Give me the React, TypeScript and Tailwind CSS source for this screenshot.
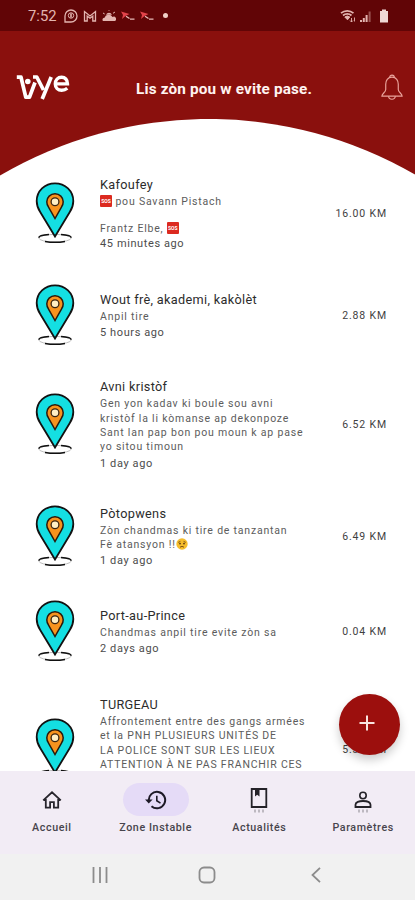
import { ReactNode } from "react";

type Zone = {
  title: string;
  lines: ReactNode[];
  lineHeight?: string;
  time?: string;
  distance: string;
  row: string;
};

function Sos() {
  return (
    <span className="inline-flex h-[12px] w-[12px] items-center justify-center rounded-[1px] bg-[#dc2a20] align-[2px] text-[5px] font-bold leading-none tracking-normal text-white">
      SOS
    </span>
  );
}

function SadFace() {
  return (
    <svg viewBox="0 0 12 12" className="inline h-[12px] w-[12px] align-[-2px]">
      <circle cx="6" cy="6" r="5.7" fill="#f5bd2c" />
      <path d="M2.2 4.4 4.4 3.4M9.8 4.4 7.6 3.4" stroke="#6b4212" strokeWidth="0.8" />
      <circle cx="4" cy="5.6" r="0.9" fill="#5b3413" />
      <circle cx="8" cy="5.6" r="0.9" fill="#5b3413" />
      <path d="M4 9.2q2-1.7 4 0" stroke="#6b4212" strokeWidth="0.9" fill="none" />
    </svg>
  );
}

function Pin() {
  return (
    <svg viewBox="0 0 40 62" className="mb-[2px] h-[62px] w-[40px] shrink-0" fill="none">
      <ellipse cx="20" cy="56.2" rx="16" ry="3.8" fill="#fff" stroke="#bdbdbd" strokeWidth="1" />
      <path
        d="M14 52.6C8 53 3.8 54.3 3.8 55.8M26 52.6c6 .4 10.2 1.7 10.2 3.2M10 59.4c6 1.1 14 1.1 20 0"
        stroke="#111"
        strokeWidth="1.5"
      />
      <path
        d="M20 1.3C9.8 1.3 1.7 9.2 1.7 19c0 4 1.3 7.7 3.5 11L20 54.5 34.8 30c2.2-3.3 3.5-7 3.5-11C38.3 9.2 30.2 1.3 20 1.3Z"
        fill="#14dfe2"
        stroke="#121212"
        strokeWidth="1.8"
      />
      <path
        d="M20 11.8c-4.6 0-8.2 3.5-8.2 8 0 1.9.6 3.6 1.600 5L20 36.5l6.600-11.700c1-1.400 1.600-3.100 1.600-5 0-4.500-3.600-8-8.200-8Z"
        fill="#f7931e"
        stroke="#2a1a0c"
        strokeWidth="1.5"
      />
      <circle cx="20" cy="19.8" r="3.9" fill="#ffefc4" stroke="#3a2410" strokeWidth="1.3" />
    </svg>
  );
}

const zones: Zone[] = [
  {
    title: "Kafoufey",
    lines: [
      <>
        <Sos /> pou Savann Pistach
      </>,
      <>&nbsp;</>,
      <>
        Frantz Elbe, <Sos />
      </>,
    ],
    lineHeight: "h-[13.5px]",
    time: "45 minutes ago",
    distance: "16.00 KM",
    row: "h-[96px]",
  },
  {
    title: "Wout frè, akademi, kakòlèt",
    lines: ["Anpil tire"],
    time: "5 hours ago",
    distance: "2.88 KM",
    row: "h-[108px]",
  },
  {
    title: "Avni kristòf",
    lines: [
      "Gen yon kadav ki boule sou avni",
      "kristòf la li kòmanse ap dekonpoze",
      "Sant lan pap bon pou moun k ap pase",
      "yo sitou timoun",
    ],
    time: "1 day ago",
    distance: "6.52 KM",
    row: "h-[110px]",
  },
  {
    title: "Pòtopwens",
    lines: [
      "Zòn chandmas ki tire de tanzantan",
      <>
        Fè atansyon !!
        <SadFace />
      </>,
    ],
    time: "1 day ago",
    distance: "6.49 KM",
    row: "h-[114px]",
  },
  {
    title: "Port-au-Prince",
    lines: ["Chandmas anpil tire evite zòn sa"],
    time: "2 days ago",
    distance: "0.04 KM",
    row: "h-[76px]",
  },
  {
    title: "TURGEAU",
    lines: [
      "Affrontement entre des gangs armées",
      "et la PNH PLUSIEURS UNITÉS DE",
      "LA POLICE SONT SUR LES LIEUX",
      "ATTENTION À NE PAS FRANCHIR CES",
    ],
    distance: "5.33 KM",
    row: "h-[160px]",
  },
];

function ZoneRow({ zone }: { zone: Zone }) {
  return (
    <li className={`flex shrink-0 items-center pl-[35px] pr-[28px] ${zone.row}`}>
      <Pin />
      <div className={`ml-[25px] flex-1 whitespace-nowrap ${zone.time ? "" : "pb-[32px]"}`}>
        <h2 className="mb-[2px] text-[12.7px] leading-[17px] tracking-[0.33px] text-[#2c2c2c]">{zone.title}</h2>
        <div className="text-[10.5px] leading-[14.4px] tracking-[0.8px] text-[#5c5c5c]">
          {zone.lines.map((line, i) => (
            <p key={i} className={zone.lineHeight ?? "h-[14.4px]"}>
              {line}
            </p>
          ))}
        </div>
        {zone.time && (
          <p className="text-[11px] leading-[17px] tracking-[0.6px] text-[#4c4c4c]">{zone.time}</p>
        )}
      </div>
      <span className="text-[10.5px] tracking-[0.85px] text-[#3f3f3f]">{zone.distance}</span>
    </li>
  );
}

function StatusBar() {
  return (
    <div className="flex h-[31px] items-center bg-[#610506] pl-[28px] pr-[26px] text-[#e3b5b0]">
      <span className="w-[36px] pt-[2px] text-[14.8px] leading-none">7:52</span>
      <svg viewBox="0 0 14 14" className="h-[14px] w-[14px]" fill="none" stroke="currentColor">
        <path d="M1 13V7a6 6 0 1 1 6 6Z" strokeWidth="1.3" />
        <circle cx="7" cy="6.5" r="2.7" />
        <path d="M7 4.5v4" strokeWidth="1.6" />
      </svg>
      <svg viewBox="0 0 14 12" className="ml-[5px] h-[12px] w-[14px]" fill="none" stroke="currentColor">
        <path d="M1.5 11V1.5L7 6l5.5-4.5V11h-2.7V6L7 8.2 4.2 6v5Z" strokeWidth="1.3" />
      </svg>
      <svg viewBox="0 0 14 12" className="ml-[5px] h-[12px] w-[14px]" fill="currentColor">
        <path d="M1 11a2 2 0 0 1 1.5-3.3A4.4 4.4 0 0 1 10.5 7 2.2 2.2 0 0 1 13 11Z" />
        <path d="M4 4.8a3.3 3.3 0 0 1 6 0Z" />
        <path d="M1 3l1.7 1M13 2l-2 1.3M7 .3V1" stroke="currentColor" />
      </svg>
      {[0, 1].map((i) => (
        <svg key={i} viewBox="0 0 14 10" className="ml-[5px] h-[10px] w-[14px]">
          <path d="M0 .5 8.5 3 4.5 5 1 8l1-4Z" fill="#e2434a" />
          <path d="M5 5.2 8.5 7.5M9 8.2h4.5" stroke="#e8bcb8" strokeWidth="1.3" />
        </svg>
      ))}
      <span className="ml-[9px] h-[5px] w-[5px] rounded-full bg-[#f0cfc6]" />
      <div className="ml-auto flex items-center">
        <svg viewBox="0 0 16 14" className="h-[14px] w-[16px]" fill="none" stroke="currentColor">
          <path d="M1 4.2a9.5 9.5 0 0 1 12.5 0M3 6.5a6.3 6.3 0 0 1 8.5 0" strokeWidth="1.7" />
          <path d="M4.8 8a4 4 0 0 1 5 0L7.5 10.8Z" fill="currentColor" />
          <path d="M11.5 9v4M10 11.5l1.5 1.5L13 11.5M14.5 12.5V8.5" strokeWidth="0.9" />
        </svg>
        <svg viewBox="0 0 12 12" className="ml-[4px] h-[12px] w-[12px]" fill="currentColor">
          <path d="M0 12v-2h2v2ZM2.8 12V8h2v4ZM5.6 12V5h2v7Z" />
          <path d="M8.6 12V1.5h2V12Z" opacity="0.45" />
        </svg>
        <svg viewBox="0 0 10 14" className="ml-[7px] h-[14px] w-[10px]" fill="#f0d8d4">
          <path d="M3 .5h4V2h2v11.5H1V2h2Z" />
        </svg>
      </div>
    </div>
  );
}

function Header() {
  return (
    <header className="h-[145px] bg-[#8a100d]">
      <div className="flex h-[88px] items-start pl-[16px] pr-[11px]">
        {/* Vye logo */}
        <svg viewBox="0 0 54 27" className="mt-[43px] h-[27px] w-[54px] shrink-0" fill="none" stroke="#fff" strokeWidth="3.7">
          <path d="M.8 3.2H5L9.8 23.2h3.7L19 8.5M17 3h3.8L27.5 16" strokeLinejoin="round" />
          <path d="M35.2 3 26.2 25" />
          <path
            d="M39.8 9.9H51.5C51.5 5.6 49 3.3 45.6 3.3c-3.7 0-6.3 2.8-6.3 6.6s2.6 6.3 6.4 6.3c2.3 0 3.9-.6 5.6-2"
            strokeWidth="3.4"
          />
          <circle cx="11.8" cy="7.5" r="2.8" fill="#fff" stroke="none" />
        </svg>
        <h1 className="ml-[66px] mt-[48px] flex-1 whitespace-nowrap text-[15.3px] font-bold leading-[20px] tracking-[0.17px] text-[#fff3f0]">
          Lis zòn pou w evite pase.
        </h1>
        <svg viewBox="0 0 24 28" className="mt-[43px] h-[27px] w-[24px]" fill="none" stroke="#eaa49c" strokeWidth="1.2">
          <path d="M12 3.3C7.500 3.3 5.5 6.8 5.5 10.5v5.5c0 2.8-4 4.5-4 7h21c0-2.500-4-4.200-4-7v-5.500c0-3.700-2-7.200-6.500-7.200Z" />
          <path d="M9.6 3.5a2.4 2.4 0 0 1 4.8 0M8.5 23.2a3.5 3 0 0 0 7 0" />
        </svg>
      </div>
      <svg viewBox="0 0 415 57" className="h-[57px] w-full">
        <path d="M0 56.5A412 412 0 0 1 415 55.5V57H0Z" fill="#fff" />
      </svg>
    </header>
  );
}

const tabs = [
  {
    label: "Accueil",
    active: false,
    icon: (
      <svg viewBox="0 0 20 20" className="h-[20px] w-[20px]" fill="none" stroke="#27252c" strokeWidth="1.8">
        <path d="M1.2 10.3 10 2.3l8.8 8M3.8 9v8.7h4.3v-5.5h3.8v5.5h4.3V9" />
      </svg>
    ),
  },
  {
    label: "Zone Instable",
    active: true,
    icon: (
      <svg viewBox="0 0 22 22" className="h-[22px] w-[22px]" fill="none" stroke="#1d1a26" strokeWidth="2">
        <path d="M3.8 12A8.2 8.2 0 1 1 6.5 17.2" />
        <path d="M0 10.6h7.6L3.8 14.6Z" fill="#1d1a26" stroke="none" />
        <path d="M11.8 6.7v5l3.7 2.4" strokeWidth="1.6" />
      </svg>
    ),
  },
  {
    label: "Actualités",
    active: false,
    icon: (
      <svg viewBox="0 0 18 26" className="h-[26px] w-[18px]" fill="none" stroke="#242228">
        <path d="M1.7 2h14.6v18H1.7Z" strokeWidth="1.8" />
        <path d="M5 2.5h4.5v7L7.2 7.8 5 9.5Z" fill="#242228" stroke="none" />
        <path d="M5 22.5v3M9 22.5v3M13 22.5v3" stroke="#88858c" />
      </svg>
    ),
  },
  {
    label: "Paramètres",
    active: false,
    icon: (
      <svg viewBox="0 0 18 26" className="h-[26px] w-[18px]" fill="none" stroke="#242228">
        <circle cx="9" cy="8.5" r="3.2" strokeWidth="1.6" />
        <path d="M1.5 20v-2.2c0-2.600 3.600-3.800 7.500-3.800s7.500 1.200 7.500 3.800V20Z" strokeWidth="1.8" />
        <path d="M5 22.5v3M9 22.5v3M13 22.5v3" stroke="#88858c" />
      </svg>
    ),
  },
];

export default function App() {
  return (
    <div className="relative flex h-[900px] w-[415px] flex-col overflow-hidden bg-white font-[Roboto,sans-serif]">
      <StatusBar />
      <Header />
      <main className="-mt-[10px] flex min-h-0 flex-1 flex-col overflow-hidden">
        <ul className="flex flex-col">
          {zones.map((zone) => (
            <ZoneRow key={zone.title} zone={zone} />
          ))}
        </ul>
      </main>

      <button
        aria-label="Ajouter"
        className="absolute left-[338.5px] top-[694px] flex h-[61px] w-[61px] items-center justify-center rounded-full bg-[#9c0f0d] shadow-[0_5px_10px_rgba(0,0,0,0.2)]"
      >
        <svg viewBox="0 0 16 16" className="-ml-[5px] -mt-[3px] h-[16px] w-[16px]" stroke="#f9e3df" strokeWidth="2">
          <path d="M8 .5v15M.5 8h15" />
        </svg>
      </button>

      <nav className="relative grid h-[83px] shrink-0 grid-cols-4 bg-[#f2ecf5] pt-[12px]">
        {tabs.map((tab) => (
          <div key={tab.label} className="flex flex-col items-center">
            <span
              className={`flex h-[33px] w-[66px] items-center justify-center rounded-full ${
                tab.active ? "bg-[#e5dbf7]" : ""
              }`}
            >
              {tab.icon}
            </span>
            <span className="mt-[4px] whitespace-nowrap text-[10.7px] font-medium leading-[16px] tracking-[0.6px] text-[#47444c]">
              {tab.label}
            </span>
          </div>
        ))}
      </nav>

      <div className="flex h-[46px] shrink-0 items-center bg-[#f1f1f1] pb-[4px]">
        <svg viewBox="0 0 16 16" className="ml-[92px] h-[16px] w-[16px]" stroke="#8c8c8c" strokeWidth="1.8">
          <path d="M1.5 0v16M8 0v16M14.5 0v16" />
        </svg>
        <svg viewBox="0 0 18 18" className="ml-[90px] h-[18px] w-[18px]" fill="none" stroke="#8c8c8c" strokeWidth="1.8">
          <rect x="1.5" y="1.5" width="15" height="15" rx="4.5" />
        </svg>
        <svg viewBox="0 0 10 16" className="ml-[95px] h-[16px] w-[10px]" fill="none" stroke="#8c8c8c" strokeWidth="1.8">
          <path d="M9 .8 1.5 8 9 15.2" />
        </svg>
      </div>
    </div>
  );
}
